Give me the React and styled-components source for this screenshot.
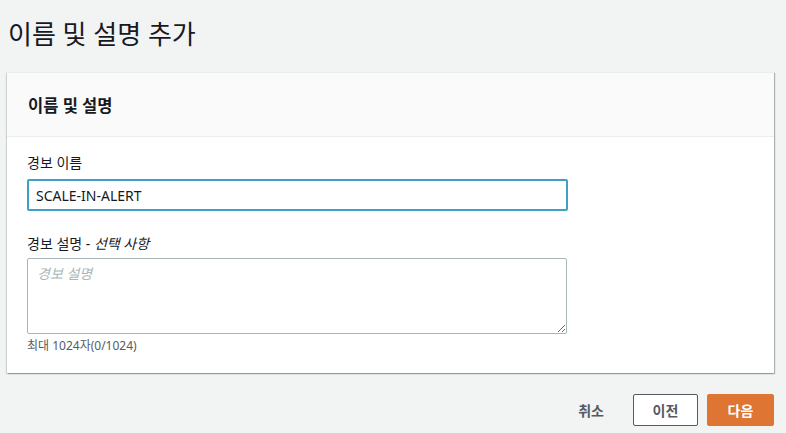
import styled, { createGlobalStyle } from "styled-components";

const GlobalStyle = createGlobalStyle`
	html, body {
		margin: 0;
		padding: 0;
		background-color: #f2f3f3;
		font-family: "Noto Sans", "Noto Sans CJK KR", sans-serif;
		color: #16191f;
	}
`;

const Page = styled.div`
	width: 786px;
	height: 433px;
	padding: 16px 12px 0 7px;
	box-sizing: border-box;
	display: flex;
	flex-direction: column;
`;

const Heading = styled.h1`
	margin: 0 0 20px 1px;
	font-size: 26px;
	line-height: 36px;
	font-weight: 400;
	color: #16191f;
`;

const Card = styled.div`
	background-color: #fff;
	border-top: 1px solid #eaeded;
	box-shadow: 1px 1px 1px rgba(0, 28, 36, 0.3), -1px 1px 1px rgba(0, 28, 36, 0.15);
`;

const CardHeader = styled.div`
	height: 63px;
	background-color: #fafafa;
	border-bottom: 1px solid #eaeded;
	padding: 0 21px;
	display: flex;
	align-items: center;
`;

const CardTitle = styled.h2`
	margin: 0;
	font-size: 16.5px;
	font-weight: 700;
	color: #16191f;
`;

const CardBody = styled.div`
	padding: 16px 20px 19px 20px;
	display: flex;
	flex-direction: column;
`;

const Field = styled.div`
	display: flex;
	flex-direction: column;
	margin-bottom: ${(props) => props.gap || "0"};
`;

const Label = styled.label`
	font-size: 14px;
	line-height: 20px;
	color: #16191f;
	margin-bottom: ${(props) => props.gap || "6px"};

	em {
		font-style: italic;
	}
`;

const TextInput = styled.input`
	width: 541px;
	height: 32px;
	box-sizing: border-box;
	border: 2px solid #3f9fc7;
	border-radius: 2px;
	padding: 0 7px;
	font-family: "Noto Sans", "Noto Sans CJK KR", sans-serif;
	font-size: 14px;
	color: #16191f;
	outline: none;
`;

const TextArea = styled.textarea`
	width: 540px;
	height: 76px;
	box-sizing: border-box;
	border: 1px solid #aab7b8;
	border-radius: 2px;
	padding: 4px 9px;
	font-family: "Noto Sans", "Noto Sans CJK KR", sans-serif;
	font-size: 14px;
	color: #16191f;
	outline: none;
	display: block;

	&::placeholder {
		color: #aab7b8;
		font-style: italic;
	}
`;

const Hint = styled.div`
	margin-top: 4px;
	font-size: 12px;
	line-height: 16px;
	color: #545b64;
`;

const Footer = styled.div`
	margin-top: 21px;
	display: flex;
	justify-content: flex-end;
	align-items: center;
	gap: 9px;
`;

const Button = styled.button`
	height: 32px;
	min-width: ${(props) =>
		props.variant === "link" ? "0" : props.variant === "primary" ? "67px" : "65px"};
	padding: ${(props) => (props.variant === "link" ? "0" : "0 18px")};
	box-sizing: border-box;
	border-radius: 2px;
	font-family: "Noto Sans", "Noto Sans CJK KR", sans-serif;
	font-size: 14px;
	font-weight: 700;
	cursor: pointer;
	border: 1px solid
		${(props) =>
			props.variant === "primary"
				? "#de7532"
				: props.variant === "link"
				? "transparent"
				: "#545b64"};
	background-color: ${(props) =>
		props.variant === "primary"
			? "#de7532"
			: props.variant === "link"
			? "transparent"
			: "#fff"};
	color: ${(props) => (props.variant === "primary" ? "#fff" : "#545b64")};
	margin-right: ${(props) => (props.variant === "link" ? "19px" : "0")};
`;

const App = () => {
	return (
		<>
			<GlobalStyle />
			<Page>
				<Heading>이름 및 설명 추가</Heading>
				<Card>
					<CardHeader>
						<CardTitle>이름 및 설명</CardTitle>
					</CardHeader>
					<CardBody>
						<Field gap="23px">
							<Label>경보 이름</Label>
							<TextInput defaultValue="SCALE-IN-ALERT" />
						</Field>
						<Field>
							<Label gap="4px">
								경보 설명 - <em>선택 사항</em>
							</Label>
							<TextArea placeholder="경보 설명" />
							<Hint>최대 1024자(0/1024)</Hint>
						</Field>
					</CardBody>
				</Card>
				<Footer>
					<Button variant="link">취소</Button>
					<Button>이전</Button>
					<Button variant="primary">다음</Button>
				</Footer>
			</Page>
		</>
	);
};

export default App;
